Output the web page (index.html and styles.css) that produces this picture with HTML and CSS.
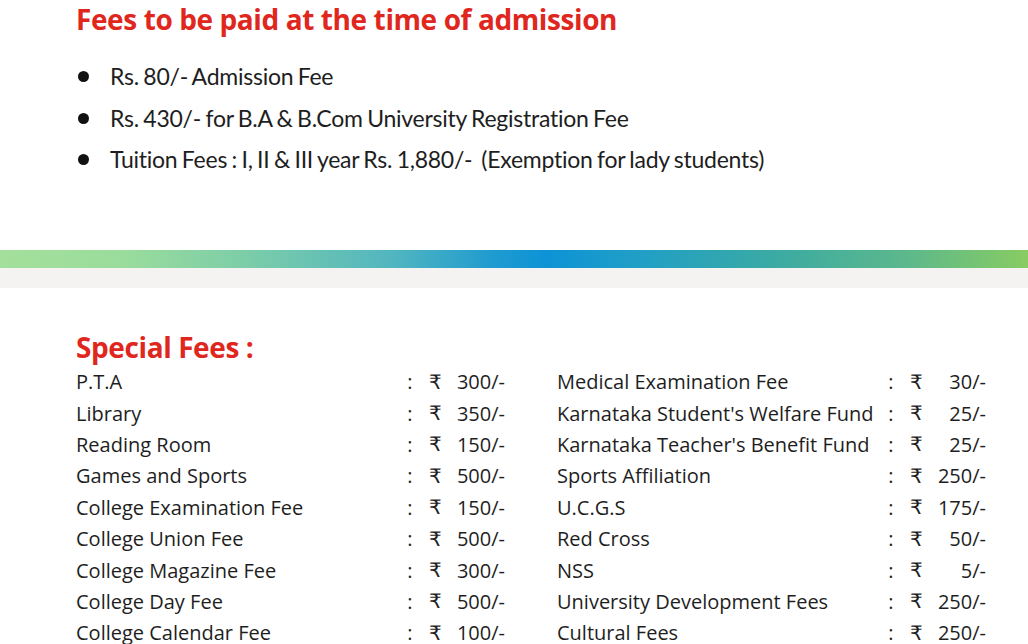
FILE: index.html
```html
<!DOCTYPE html>
<html lang="en">
<head>
<meta charset="utf-8">
<title>Fees</title>
<link rel="stylesheet" href="styles.css">
</head>
<body>
<section class="admission">
  <h1 class="title">Fees to be paid at the time of admission</h1>
  <ul class="bullets">
    <li>Rs. 80/- Admission Fee</li>
    <li>Rs. 430/- for B.A &amp; B.Com University Registration Fee</li>
    <li>Tuition Fees : I, II &amp; III year Rs. 1,880/-&nbsp; (Exemption for lady students)</li>
  </ul>
</section>
<div class="band">
  <div class="band-gradient"></div>
  <div class="band-grey"></div>
</div>
<section class="special">
  <h2 class="title">Special Fees :</h2>
  <div class="fee-columns">
    <div class="fee-table">
      <span class="lbl">P.T.A</span><span class="col">:</span><span class="rs">₹</span><span class="amt">300/-</span>
      <span class="lbl">Library</span><span class="col">:</span><span class="rs">₹</span><span class="amt">350/-</span>
      <span class="lbl">Reading Room</span><span class="col">:</span><span class="rs">₹</span><span class="amt">150/-</span>
      <span class="lbl">Games and Sports</span><span class="col">:</span><span class="rs">₹</span><span class="amt">500/-</span>
      <span class="lbl">College Examination Fee</span><span class="col">:</span><span class="rs">₹</span><span class="amt">150/-</span>
      <span class="lbl">College Union Fee</span><span class="col">:</span><span class="rs">₹</span><span class="amt">500/-</span>
      <span class="lbl">College Magazine Fee</span><span class="col">:</span><span class="rs">₹</span><span class="amt">300/-</span>
      <span class="lbl">College Day Fee</span><span class="col">:</span><span class="rs">₹</span><span class="amt">500/-</span>
      <span class="lbl">College Calendar Fee</span><span class="col">:</span><span class="rs">₹</span><span class="amt">100/-</span>
    </div>
    <div class="fee-table">
      <span class="lbl">Medical Examination Fee</span><span class="col">:</span><span class="rs">₹</span><span class="amt">30/-</span>
      <span class="lbl">Karnataka Student's Welfare Fund</span><span class="col">:</span><span class="rs">₹</span><span class="amt">25/-</span>
      <span class="lbl">Karnataka Teacher's Benefit Fund</span><span class="col">:</span><span class="rs">₹</span><span class="amt">25/-</span>
      <span class="lbl">Sports Affiliation</span><span class="col">:</span><span class="rs">₹</span><span class="amt">250/-</span>
      <span class="lbl">U.C.G.S</span><span class="col">:</span><span class="rs">₹</span><span class="amt">175/-</span>
      <span class="lbl">Red Cross</span><span class="col">:</span><span class="rs">₹</span><span class="amt">50/-</span>
      <span class="lbl">NSS</span><span class="col">:</span><span class="rs">₹</span><span class="amt">5/-</span>
      <span class="lbl">University Development Fees</span><span class="col">:</span><span class="rs">₹</span><span class="amt">250/-</span>
      <span class="lbl">Cultural Fees</span><span class="col">:</span><span class="rs">₹</span><span class="amt">250/-</span>
    </div>
  </div>
</section>
</body>
</html>
```
FILE: styles.css
```css
html, body {
  margin: 0;
  padding: 0;
  background: #ffffff;
}
body {
  font-family: "Open Sans", "Noto Sans", "DejaVu Sans", sans-serif;
  color: #1e1e1e;
  width: 1028px;
  height: 644px;
  overflow: hidden;
}
.title {
  margin: 0;
  color: #e0271e;
  font-family: "Open Sans", sans-serif;
  font-weight: 700;
  font-size: 28px;
  letter-spacing: -0.4px;
}
.admission {
  padding: 0 0 0 76px;
  height: 250px;
}
.admission .title {
  line-height: 38px;
}
.bullets {
  list-style: none;
  margin: 18px 0 0 0;
  padding: 0;
}
.bullets li {
  position: relative;
  padding-left: 34px;
  font-family: "Lato", sans-serif;
  font-size: 23px;
  line-height: 41.5px;
  color: #1e1e1e;
  letter-spacing: -0.25px;
  word-spacing: -1.2px;
}
.bullets li::before {
  content: "";
  position: absolute;
  left: 2px;
  top: 15px;
  width: 11px;
  height: 11px;
  border-radius: 50%;
  background: #111;
}
.band-gradient {
  height: 18px;
  background: linear-gradient(90deg, #a4e09c 0%, #9adc9c 12%, #7ccda8 24%, #52b6c0 38%, #1f9bd0 48%, #0d93d6 53%, #22a0c4 63%, #3aaaa4 75%, #5cb88c 88%, #88cc62 100%);
}
.band-grey {
  height: 20px;
  background: #f4f3f1;
}
.special {
  padding: 40px 0 0 76px;
}
.special .title {
  line-height: 38px;
}
.fee-columns {
  display: flex;
  gap: 52px;
}
.fee-table {
  display: grid;
  grid-template-columns: 324px 20px 24px 61px;
  grid-auto-rows: 31.4px;
  align-items: center;
  font-size: 20px;
  color: #1e1e1e;
}
.fee-table .col {
  text-align: center;
}
.fee-table .rs {
  padding-left: 9px;
  font-family: "DejaVu Sans", "Noto Sans", sans-serif;
  font-size: 20px;
}
.fee-table .amt {
  text-align: right;
}
```
